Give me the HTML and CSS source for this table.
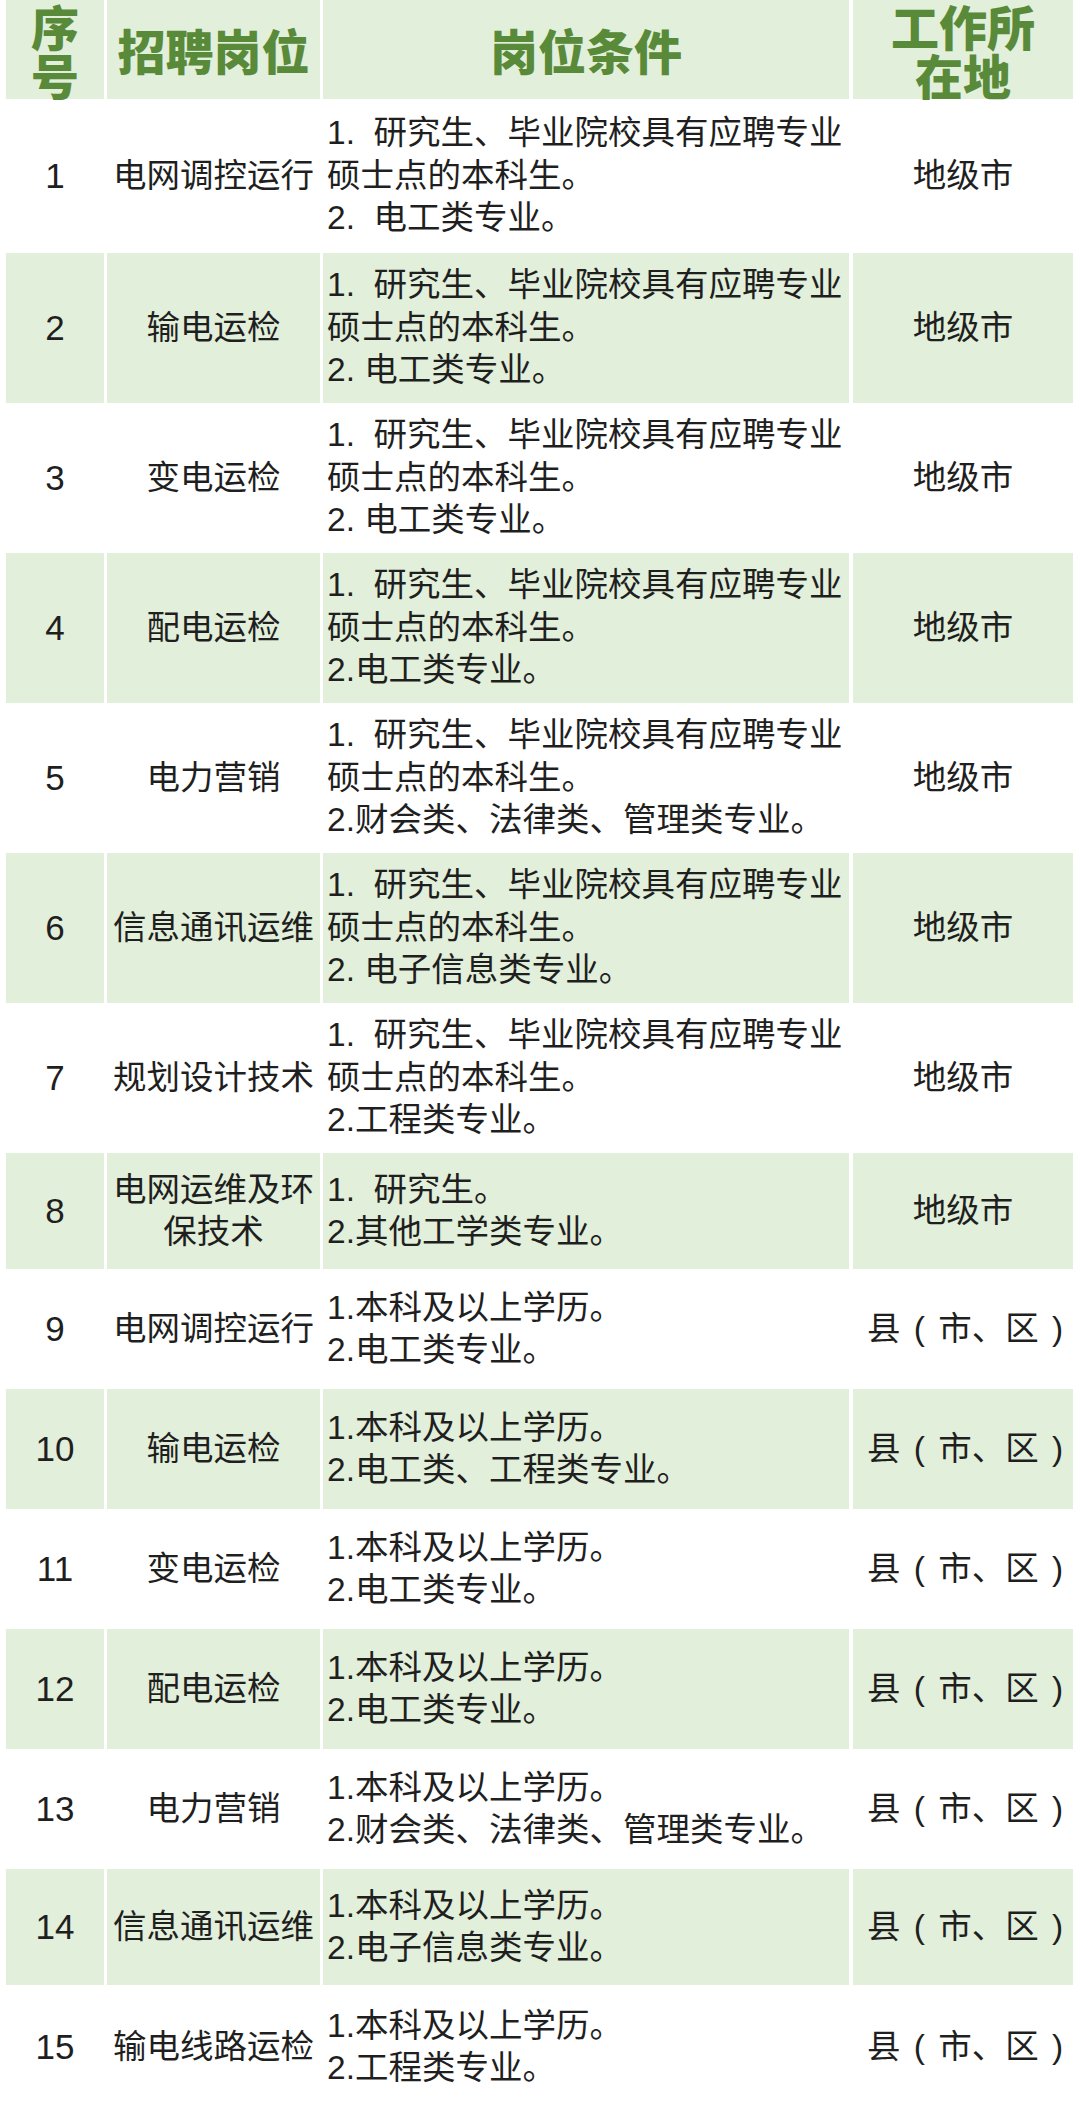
FILE: index.html
```html
<!DOCTYPE html>
<html lang="zh-CN">
<head>
<meta charset="utf-8">
<title>招聘岗位</title>
<link rel="stylesheet" href="styles.css">
</head>
<body>
<div class="sheet">
  <div class="row head">
    <div class="cell c1"><div class="hl">序</div><div class="hl">号</div></div>
    <div class="cell c2">招聘岗位</div>
    <div class="cell c3h">岗位条件</div>
    <div class="cell c4"><div class="hl">工作所</div><div class="hl">在地</div></div>
  </div>

  <div class="row first">
    <div class="cell c1 num">1</div>
    <div class="cell c2">电网调控运行</div>
    <div class="cell c3"><div class="ln">1.  研究生、毕业院校具有应聘专业</div><div class="ln">硕士点的本科生。</div><div class="ln">2.  电工类专业。</div></div>
    <div class="cell c4">地级市</div>
  </div>
  <div class="row tall alt">
    <div class="cell c1 num">2</div>
    <div class="cell c2">输电运检</div>
    <div class="cell c3"><div class="ln">1.  研究生、毕业院校具有应聘专业</div><div class="ln">硕士点的本科生。</div><div class="ln">2. 电工类专业。</div></div>
    <div class="cell c4">地级市</div>
  </div>
  <div class="row tall">
    <div class="cell c1 num">3</div>
    <div class="cell c2">变电运检</div>
    <div class="cell c3"><div class="ln">1.  研究生、毕业院校具有应聘专业</div><div class="ln">硕士点的本科生。</div><div class="ln">2. 电工类专业。</div></div>
    <div class="cell c4">地级市</div>
  </div>
  <div class="row tall alt">
    <div class="cell c1 num">4</div>
    <div class="cell c2">配电运检</div>
    <div class="cell c3"><div class="ln">1.  研究生、毕业院校具有应聘专业</div><div class="ln">硕士点的本科生。</div><div class="ln">2.电工类专业。</div></div>
    <div class="cell c4">地级市</div>
  </div>
  <div class="row tall">
    <div class="cell c1 num">5</div>
    <div class="cell c2">电力营销</div>
    <div class="cell c3"><div class="ln">1.  研究生、毕业院校具有应聘专业</div><div class="ln">硕士点的本科生。</div><div class="ln">2.财会类、法律类、管理类专业。</div></div>
    <div class="cell c4">地级市</div>
  </div>
  <div class="row tall alt">
    <div class="cell c1 num">6</div>
    <div class="cell c2">信息通讯运维</div>
    <div class="cell c3"><div class="ln">1.  研究生、毕业院校具有应聘专业</div><div class="ln">硕士点的本科生。</div><div class="ln">2. 电子信息类专业。</div></div>
    <div class="cell c4">地级市</div>
  </div>
  <div class="row tall">
    <div class="cell c1 num">7</div>
    <div class="cell c2">规划设计技术</div>
    <div class="cell c3"><div class="ln">1.  研究生、毕业院校具有应聘专业</div><div class="ln">硕士点的本科生。</div><div class="ln">2.工程类专业。</div></div>
    <div class="cell c4">地级市</div>
  </div>
  <div class="row short alt">
    <div class="cell c1 num">8</div>
    <div class="cell c2">电网运维及环保技术</div>
    <div class="cell c3"><div class="ln">1.  研究生。</div><div class="ln">2.其他工学类专业。</div></div>
    <div class="cell c4">地级市</div>
  </div>
  <div class="row mid">
    <div class="cell c1 num">9</div>
    <div class="cell c2">电网调控运行</div>
    <div class="cell c3"><div class="ln">1.本科及以上学历。</div><div class="ln">2.电工类专业。</div></div>
    <div class="cell c4 loc">县 ( 市、区 )</div>
  </div>
  <div class="row mid alt">
    <div class="cell c1 num">10</div>
    <div class="cell c2">输电运检</div>
    <div class="cell c3"><div class="ln">1.本科及以上学历。</div><div class="ln">2.电工类、工程类专业。</div></div>
    <div class="cell c4 loc">县 ( 市、区 )</div>
  </div>
  <div class="row mid">
    <div class="cell c1 num">11</div>
    <div class="cell c2">变电运检</div>
    <div class="cell c3"><div class="ln">1.本科及以上学历。</div><div class="ln">2.电工类专业。</div></div>
    <div class="cell c4 loc">县 ( 市、区 )</div>
  </div>
  <div class="row mid alt">
    <div class="cell c1 num">12</div>
    <div class="cell c2">配电运检</div>
    <div class="cell c3"><div class="ln">1.本科及以上学历。</div><div class="ln">2.电工类专业。</div></div>
    <div class="cell c4 loc">县 ( 市、区 )</div>
  </div>
  <div class="row mid">
    <div class="cell c1 num">13</div>
    <div class="cell c2">电力营销</div>
    <div class="cell c3"><div class="ln">1.本科及以上学历。</div><div class="ln">2.财会类、法律类、管理类专业。</div></div>
    <div class="cell c4 loc">县 ( 市、区 )</div>
  </div>
  <div class="row short alt">
    <div class="cell c1 num">14</div>
    <div class="cell c2">信息通讯运维</div>
    <div class="cell c3"><div class="ln">1.本科及以上学历。</div><div class="ln">2.电子信息类专业。</div></div>
    <div class="cell c4 loc">县 ( 市、区 )</div>
  </div>
  <div class="row last">
    <div class="cell c1 num">15</div>
    <div class="cell c2">输电线路运检</div>
    <div class="cell c3"><div class="ln">1.本科及以上学历。</div><div class="ln">2.工程类专业。</div></div>
    <div class="cell c4 loc">县 ( 市、区 )</div>
  </div>
</div>
</body>
</html>
```

FILE: styles.css
```css
html, body {
  margin: 0;
  padding: 0;
  background: #ffffff;
}

body {
  font-family: "Liberation Sans", "Noto Sans CJK SC", sans-serif;
  color: #1f1f1f;
}

.sheet {
  width: 1080px;
  padding: 0 6px;
  box-sizing: border-box;
}

.row {
  display: grid;
  grid-template-columns: 98px 213px 527px 220px;
  column-gap: 3px;
  font-size: 33.5px;
  line-height: 42.5px;
}

.row .cell:nth-child(3) {
  margin-right: 1px;
}

.cell {
  display: flex;
  flex-direction: column;
  align-items: center;
  justify-content: center;
  text-align: center;
}

.head {
  height: 99px;
  font-family: "Noto Sans CJK SC", sans-serif;
  font-weight: 900;
  font-size: 48px;
  line-height: 49px;
  color: #588a39;
}

.hl {
  height: 49px;
  line-height: 49px;
}

.head .cell,
.alt .cell {
  background: #e2efda;
}

.c3 {
  align-items: flex-start;
  text-align: left;
  padding-left: 4px;
}

.ln {
  white-space: pre;
}

.num {
  font-size: 35px;
}

.loc {
  white-space: pre;
  word-spacing: 4px;
  padding-left: 4px;
}

.first { height: 154px; }
.tall { height: 150px; }
.mid { height: 120px; }
.short { height: 116px; }
.last { height: 124px; }
```
